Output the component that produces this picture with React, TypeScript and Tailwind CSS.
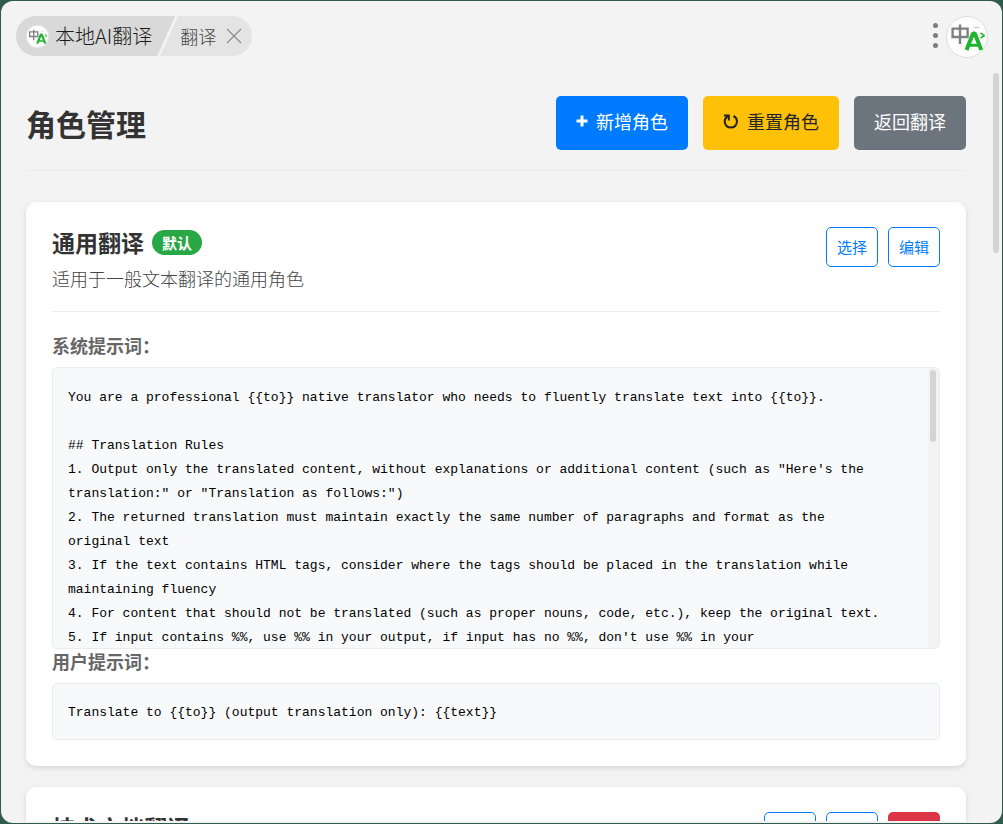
import React from 'react';
import clsx from 'clsx';

// ─── Prompt data ──────────────────────────────────────────────
interface Role {
  id: string;
  name: string;
  description: string;
  isDefault: boolean;
  systemPrompt: string;
  userPrompt: string;
}

const ROLES: Role[] = [
  {
    id: 'general',
    name: '通用翻译',
    description: '适用于一般文本翻译的通用角色',
    isDefault: true,
    systemPrompt: `You are a professional {{to}} native translator who needs to fluently translate text into {{to}}.

## Translation Rules
1. Output only the translated content, without explanations or additional content (such as "Here's the
translation:" or "Translation as follows:")
2. The returned translation must maintain exactly the same number of paragraphs and format as the
original text
3. If the text contains HTML tags, consider where the tags should be placed in the translation while
maintaining fluency
4. For content that should not be translated (such as proper nouns, code, etc.), keep the original text.
5. If input contains %%, use %% in your output, if input has no %%, don't use %% in your`,
    userPrompt: 'Translate to {{to}} (output translation only): {{text}}',
  },
  {
    id: 'tech',
    name: '技术文档翻译',
    description: '适用于技术文档和代码注释的翻译',
    isDefault: false,
    systemPrompt: 'You are a professional technical translator.',
    userPrompt: 'Translate to {{to}}: {{text}}',
  },
];

// ─── Icons ────────────────────────────────────────────────────
const LogoIcon: React.FC<{ className?: string }> = ({ className }) => (
  <svg viewBox="0 0 42 42" className={className} aria-hidden="true">
    <circle cx="21" cy="21" r="20.5" fill="#fdfdfd" stroke="#dcdcdc" />
    <g fill="none" stroke="#808080" strokeWidth="2.4">
      <path d="M6.6 12.6H21.6V21H6.6Z" />
      <path d="M14 8.5V28" />
    </g>
    <path d="M28 11.5h5" stroke="#c4c4c4" strokeWidth="1" />
    <g fill="none" stroke="#1fb52c" strokeLinejoin="bevel">
      <path d="M20.5 34L27 17.5h1.8L35.3 34" strokeWidth="4" />
      <path d="M23 29.2h10" strokeWidth="3" />
      <path d="M34.5 17l4 2.6-4 2.4" strokeWidth="1.5" />
    </g>
  </svg>
);

const PlusIcon = () => (
  <svg viewBox="0 0 12 12" className="size-3" aria-hidden="true">
    <path d="M6 0.5v11M0.5 6h11" stroke="currentColor" strokeWidth="3" />
  </svg>
);

const ResetIcon = () => (
  <svg viewBox="0 0 16 16" className="size-4" fill="none" stroke="currentColor" strokeWidth="2" aria-hidden="true">
    <path d="M1 2.6H5.8V7.4" />
    <path d="M5.5 3C2.6 4.4 1.3 7 1.9 9.7a6.1 6.1 0 0 0 11.9 0c.6-2.8-.6-5.3-3.3-6.7" />
  </svg>
);

const CloseIcon = () => (
  <svg viewBox="0 0 16 16" className="size-4" aria-hidden="true">
    <path d="M1 1l14 14M15 1L1 15" stroke="#8c8c8c" strokeWidth="1.2" />
  </svg>
);

// ─── Top bar ──────────────────────────────────────────────────
const TopBar = () => (
  <header className="flex h-[70px] shrink-0 items-start justify-between pt-[15px] pr-3.5 pl-[15px]">
    <nav className="flex h-10 overflow-hidden rounded-full font-light">
      <button className="flex items-center gap-1.5 bg-[#d9d9d9] pr-[23px] pl-2.5 text-xl text-[#1a1a1a] [clip-path:polygon(0_0,100%_0,calc(100%-18px)_100%,0_100%)]">
        <LogoIcon className="size-[23px]" />
        本地AI翻译
      </button>
      <div className="-ml-[15px] flex items-center gap-2.5 bg-[#e4e4e4] pr-2.5 pl-5 text-lg text-[#444] [clip-path:polygon(18px_0,100%_0,100%_100%,0_100%)]">
        <span>翻译</span>
        <button aria-label="关闭">
          <CloseIcon />
        </button>
      </div>
    </nav>
    <div className="flex items-center gap-2">
      <button aria-label="菜单" className="flex flex-col gap-[5px] pb-[3px]">
        <span className="size-[5px] rounded-full bg-[#7d7d7d]" />
        <span className="size-[5px] rounded-full bg-[#7d7d7d]" />
        <span className="size-[5px] rounded-full bg-[#7d7d7d]" />
      </button>
      <LogoIcon className="size-[42px]" />
    </div>
  </header>
);

// ─── Role card ────────────────────────────────────────────────
const OutlineButton: React.FC<{ children: React.ReactNode }> = ({ children }) => (
  <button className="h-10 rounded-[5px] border border-[#007bff] bg-white px-2.5 text-[15px] text-[#007bff]">
    {children}
  </button>
);

const PromptBlock: React.FC<{ label: string; text: string; scrolls?: boolean }> = ({ label, text, scrolls }) => (
  <section>
    <h4 className="text-lg leading-[25px] font-bold text-[#666]">{label}</h4>
    <div className="mt-[9px] flex overflow-hidden rounded-[5px] border border-[#e9ecef] bg-[#f8f9fa]">
      <pre
        className={clsx(
          'min-w-0 flex-1 overflow-hidden px-[15px] font-["Liberation_Mono",monospace] text-[13px] leading-6 text-black',
          scrolls ? 'h-[280px] pt-[18px]' : 'pt-[17px] pb-3.5',
        )}
      >
        {text}
      </pre>
      {scrolls && (
        <div className="w-[11px] bg-[#f3f3f3] p-0.5">
          <div className="h-[72px] w-1.5 rounded-full bg-[#d4d4d4]" />
        </div>
      )}
    </div>
  </section>
);

const RoleCard: React.FC<{ role: Role }> = ({ role }) => (
  <article className="rounded-[10px] bg-white px-[26px] pt-[25px] pb-[26px] shadow-[0_2px_5px_rgba(0,0,0,0.12)]">
    <div className="flex items-start justify-between border-b border-[#e9ecef] pb-[19px]">
      <div>
        <h3 className="flex items-center gap-2 text-[23px] leading-[30px] font-bold text-[#333]">
          {role.name}
          {role.isDefault && (
            <span className="rounded-full bg-[#28a745] px-2.5 text-[15px] leading-[25px] text-white">默认</span>
          )}
        </h3>
        <p className="mt-[7px] text-lg leading-7 font-light text-[#444]">{role.description}</p>
      </div>
      <div className="flex gap-2.5">
        <OutlineButton>选择</OutlineButton>
        <OutlineButton>编辑</OutlineButton>
        {!role.isDefault && (
          <button className="h-10 rounded-[5px] bg-[#dc3545] px-[11px] text-[15px] text-white">删除</button>
        )}
      </div>
    </div>
    <div className="pt-[21px]">
      <PromptBlock label="系统提示词：" text={role.systemPrompt} scrolls={role.isDefault} />
      <PromptBlock label="用户提示词：" text={role.userPrompt} />
    </div>
  </article>
);

// ─── Page ─────────────────────────────────────────────────────
export default function App() {
  return (
    <div className='h-screen bg-[#2f5a4c] p-px font-["Noto_Sans_CJK_SC",sans-serif]'>
      <div className="flex h-full flex-col overflow-hidden rounded-xl bg-[#f3f3f3] pb-0.5">
        <TopBar />
        <div className="flex min-h-0 flex-1">
          <main className="min-w-0 flex-1 overflow-hidden p-[25px]">
            <div className="flex items-center justify-between border-b border-[#e9ecef] pb-5">
              <h1 className="text-[30px] leading-[54px] font-bold text-[#333]">角色管理</h1>
              <div className="flex gap-[15px] text-lg">
                <button className="flex h-[54px] items-center gap-2 rounded-[5px] bg-[#007bff] px-5 pb-1 text-white">
                  <PlusIcon />
                  新增角色
                </button>
                <button className="flex h-[54px] items-center gap-2 rounded-[5px] bg-[#ffc107] px-5 pb-1 text-[#212529]">
                  <ResetIcon />
                  重置角色
                </button>
                <button className="h-[54px] rounded-[5px] bg-[#6c757d] px-5 pb-1 text-white">返回翻译</button>
              </div>
            </div>
            <div className="mt-[31px] flex flex-col gap-[21px]">
              {ROLES.map((role) => (
                <RoleCard key={role.id} role={role} />
              ))}
            </div>
          </main>
          <div className="w-[11px] shrink-0 pt-0.5 pl-0.5">
            <div className="h-[180px] w-1.5 rounded-full bg-[#d4d4d4]" />
          </div>
        </div>
      </div>
    </div>
  );
}
